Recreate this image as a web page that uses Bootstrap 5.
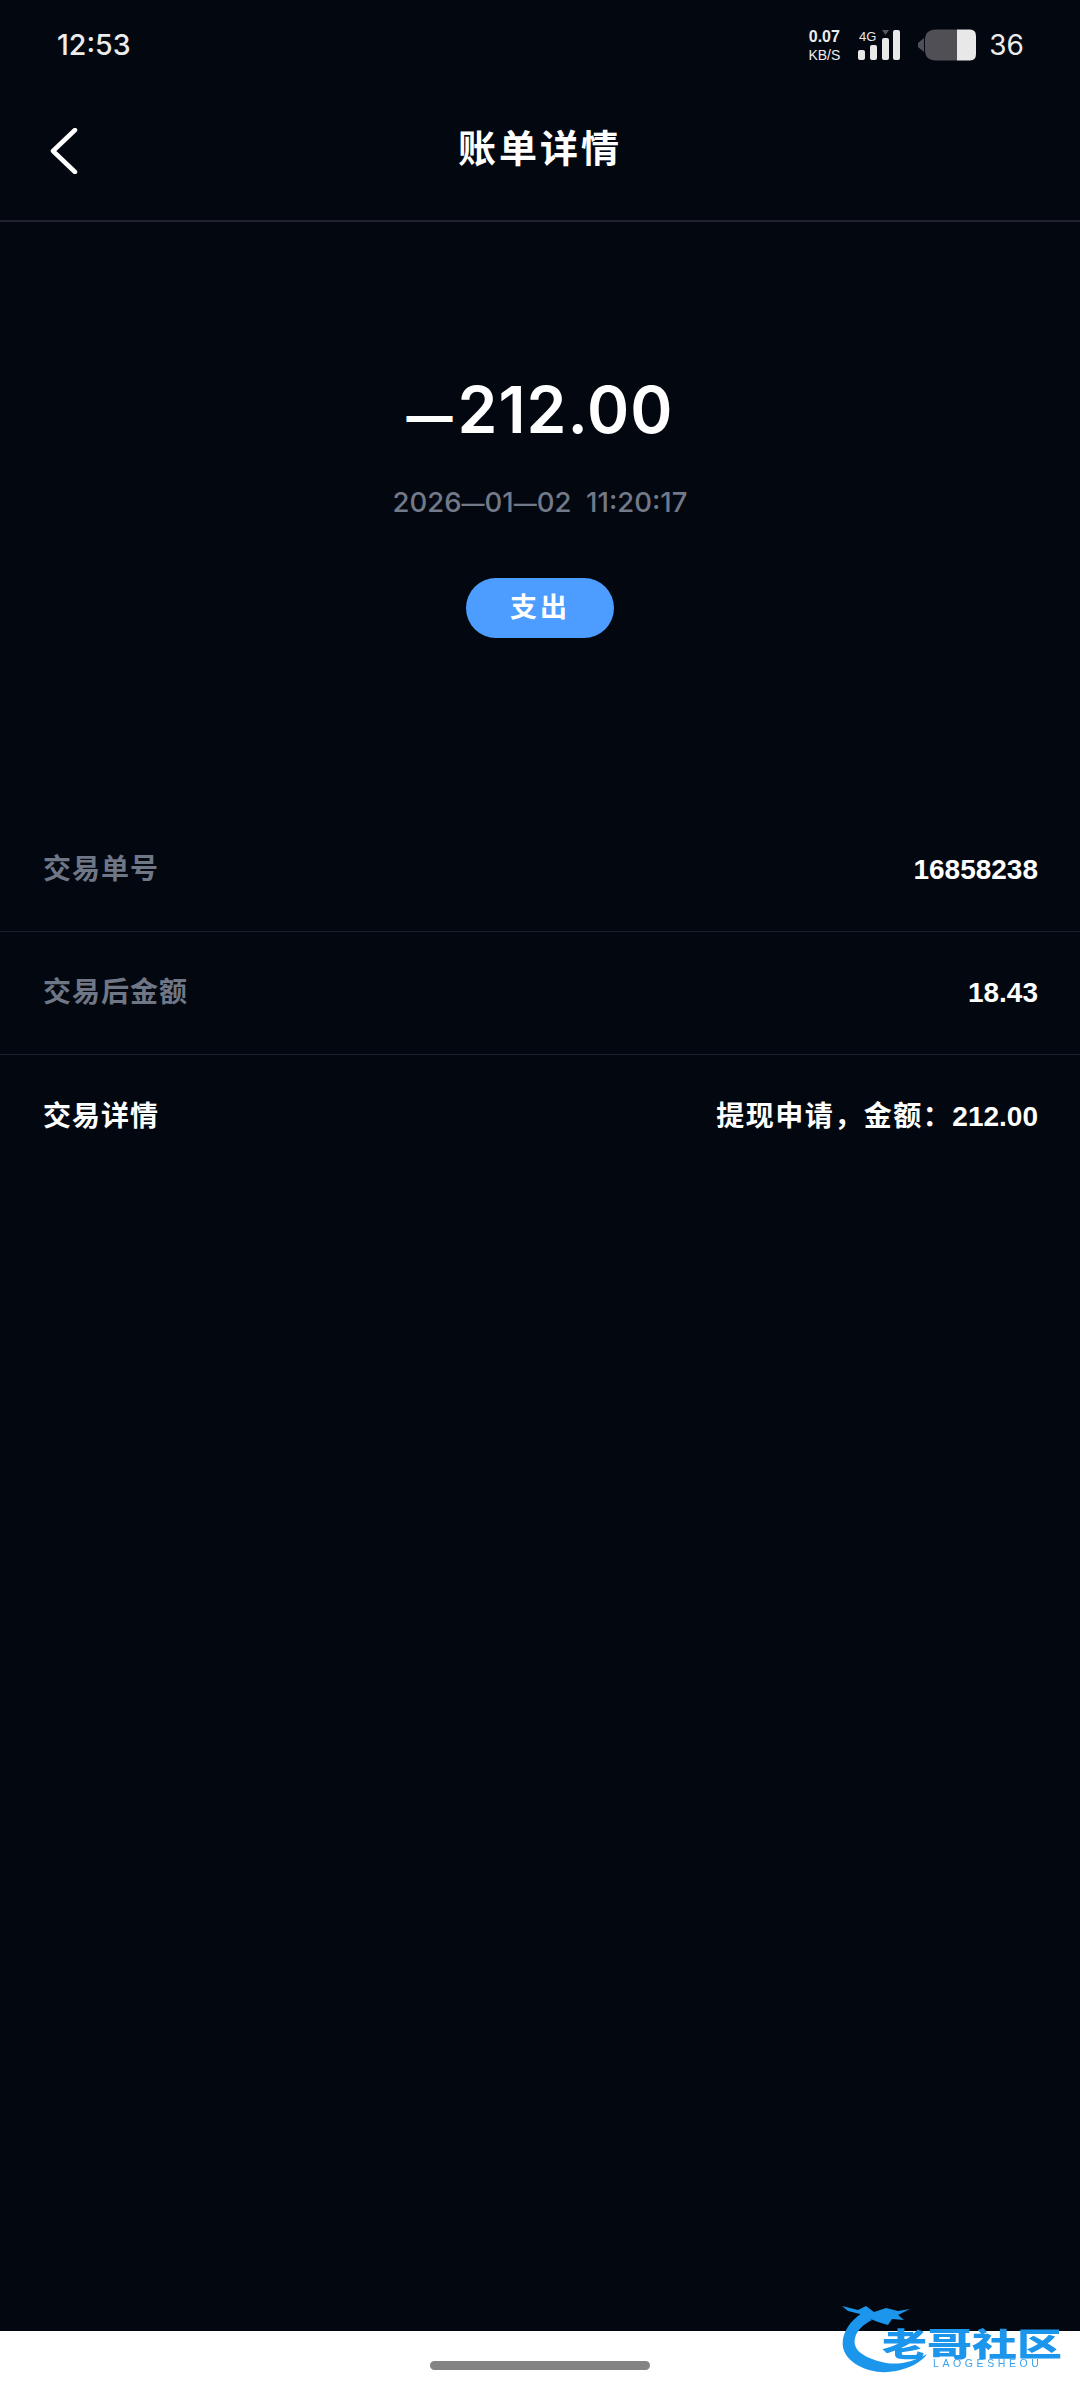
<!DOCTYPE html>
<html lang="zh-CN">
<head>
  <meta charset="UTF-8" />
  <meta name="viewport" content="width=device-width, initial-scale=1" />
  <title>账单详情</title>
  <link href="https://cdn.jsdelivr.net/npm/bootstrap@5.3.0/dist/css/bootstrap.min.css" rel="stylesheet" />
  <style>
    body {
      font-family: "Liberation Sans", "Noto Sans CJK SC", sans-serif;
      background-color: #fff;
      margin: 0;
    }
    .bill-screen {
      width: 1080px;
      height: 2400px;
      position: relative;
      overflow: hidden;
    }
    .bill-dark { background: #03070f; height: 2331px; color: #fff; }
    .status-row { height: 90px; padding: 0 56px 0 57px; color: #ececec; }
    .status-time { font-family: Inter, sans-serif; font-size: 28.5px; font-weight: 500; }
    .speed-box { width: 38px; line-height: 1; margin-right: 14px; }
    .speed-num { font-size: 16px; font-weight: 700; }
    .speed-unit { font-size: 14px; margin-top: 3px; }
    .batt-num { font-family: Inter, sans-serif; font-size: 28px; margin-left: 12px; }
    .top-bar { height: 132px; border-bottom: 2px solid #20232d; position: relative; }
    .back-btn { position: absolute; left: 50px; top: 38px; line-height: 0; }
    .top-title { font-size: 38px; font-weight: 700; letter-spacing: 3px; line-height: 1; padding-top: 40px; }
    .amount-box { padding-top: 146px; height: 587px; }
    .amount-num { font-family: Inter, sans-serif; font-size: 64px; font-weight: 600; height: 84px; line-height: 84px; letter-spacing: 1px; }
    .amount-dash { font-size: 46px; font-weight: 800; line-height: 1; margin-right: 4px; }
    .amount-time { font-family: Inter, sans-serif; font-size: 27.5px; font-weight: 500; color: #727989; height: 32px; line-height: 32px; margin-top: 34px; white-space: pre; }
    .time-dash { font-size: 23px; line-height: 1; }
    .pay-pill {
      width: 148px; height: 60px; margin-top: 60px; border-radius: 30px;
      background: #4c9dff; font-size: 27px; font-weight: 700; letter-spacing: 3px;
    }
    .info-row { height: 123px; padding: 0 42px 0 43px; border-bottom: 1px solid #1c1f29; font-size: 28px; font-weight: 700; }
    .info-row:last-child { border-bottom: 0; }
    .info-key { color: #6f7686; letter-spacing: 1px; }
    .info-white { color: #fff; }
    .info-val { color: #fff; }
    .info-cjk { letter-spacing: 1.5px; }
    .home-pill { width: 220px; height: 9px; background: #838383; border-radius: 5px; }
    .home-wrap { height: 69px; padding-top: 30px; }
    .site-logo { position: absolute; left: 838px; top: 2300px; width: 232px; height: 76px; }
    .site-logo-text { font-size: 45px; font-weight: 900; fill: #1b96ec; font-family: "Noto Sans CJK SC", sans-serif; }
    .site-logo-sub { font-size: 10.5px; letter-spacing: 3.6px; fill: #3aa3ee; font-family: "Liberation Sans", sans-serif; }
  </style>
</head>
<body>
  <div class="bill-screen">
    <div class="bill-dark">
      <div class="status-row d-flex align-items-center">
        <div class="status-time">12:53</div>
        <div class="ms-auto d-flex align-items-center">
          <div class="speed-box text-center">
            <div class="speed-num">0.07</div>
            <div class="speed-unit">KB/S</div>
          </div>
          <svg width="44" height="32" viewBox="0 0 44 32" fill="#e8e8e8">
            <text x="2" y="12" font-size="13" font-family="Liberation Sans">4G</text>
            <path d="M25 1 H32 L28.5 6 Z" fill="#55555b" />
            <rect x="1" y="21" width="7" height="10" rx="2" />
            <rect x="13" y="16" width="7" height="15" rx="2" />
            <rect x="25" y="9" width="7" height="22" rx="2" />
            <rect x="36" y="1" width="7" height="30" rx="2" />
          </svg>
          <svg class="ms-3" width="60" height="32" viewBox="0 0 60 32">
            <path d="M7 9 L1 14 V18 L7 23 Z" fill="#4f4f55" />
            <path d="M19 0.5 H40 V31.5 H19 Q8 31.5 8 21 V11 Q8 0.5 19 0.5 Z" fill="#4f4f55" />
            <path d="M40 0.5 H53 Q59 0.5 59 7 V25 Q59 31.5 53 31.5 H40 Z" fill="#e8e8e8" />
          </svg>
          <div class="batt-num">36</div>
        </div>
      </div>

      <div class="top-bar text-center">
        <a class="back-btn" href="#">
          <svg width="28" height="46" viewBox="0 0 28 46" fill="none" stroke="#fff" stroke-width="4.5" stroke-linecap="round" stroke-linejoin="round">
            <path d="M25 2 L3 23 L25 44" />
          </svg>
        </a>
        <div class="top-title">账单详情</div>
      </div>

      <div class="amount-box text-center d-flex flex-column align-items-center">
        <div class="amount-num"><span class="amount-dash">—</span>212.00</div>
        <div class="amount-time">2026<span class="time-dash">—</span>01<span class="time-dash">—</span>02  11:20:17</div>
        <div class="pay-pill d-flex align-items-center justify-content-center">支出</div>
      </div>

      <div class="info-row d-flex align-items-center justify-content-between">
        <span class="info-key">交易单号</span><span class="info-val">16858238</span>
      </div>
      <div class="info-row d-flex align-items-center justify-content-between">
        <span class="info-key">交易后金额</span><span class="info-val">18.43</span>
      </div>
      <div class="info-row d-flex align-items-center justify-content-between">
        <span class="info-key info-white">交易详情</span><span class="info-val"><span class="info-cjk">提现申请，金额：</span>212.00</span>
      </div>
    </div>
    <div class="home-wrap d-flex justify-content-center">
      <div class="home-pill"></div>
    </div>

    <svg class="site-logo" viewBox="0 0 232 76">
      <defs><filter id="soft"><feGaussianBlur stdDeviation="0.5" /></filter></defs>
      <g filter="url(#soft)">
        <path d="M24 13 C10 22 3 36 5 47 C8 64 34 76 58 71 C72 68 84 62 89 54 C76 62 58 66 44 62 C26 58 14 50 17 38 C19 30 26 24 34 20 Z" fill="#1b96ec" />
        <path d="M4 6 L20 10 L28 6 L36 12 L48 8 L60 11 L72 9 L60 15 L66 20 L54 19 L50 25 L40 22 L30 18 L22 14 L10 11 Z" fill="#1b96ec" />
        <text class="site-logo-text" transform="translate(44 56) scale(1 .72)">老哥社区</text>
        <text class="site-logo-sub" x="95" y="67">LAOGESHEOU</text>
      </g>
    </svg>
  </div>
  <script src="https://cdn.jsdelivr.net/npm/bootstrap@5.3.0/dist/js/bootstrap.bundle.min.js"></script>
</body>
</html>
